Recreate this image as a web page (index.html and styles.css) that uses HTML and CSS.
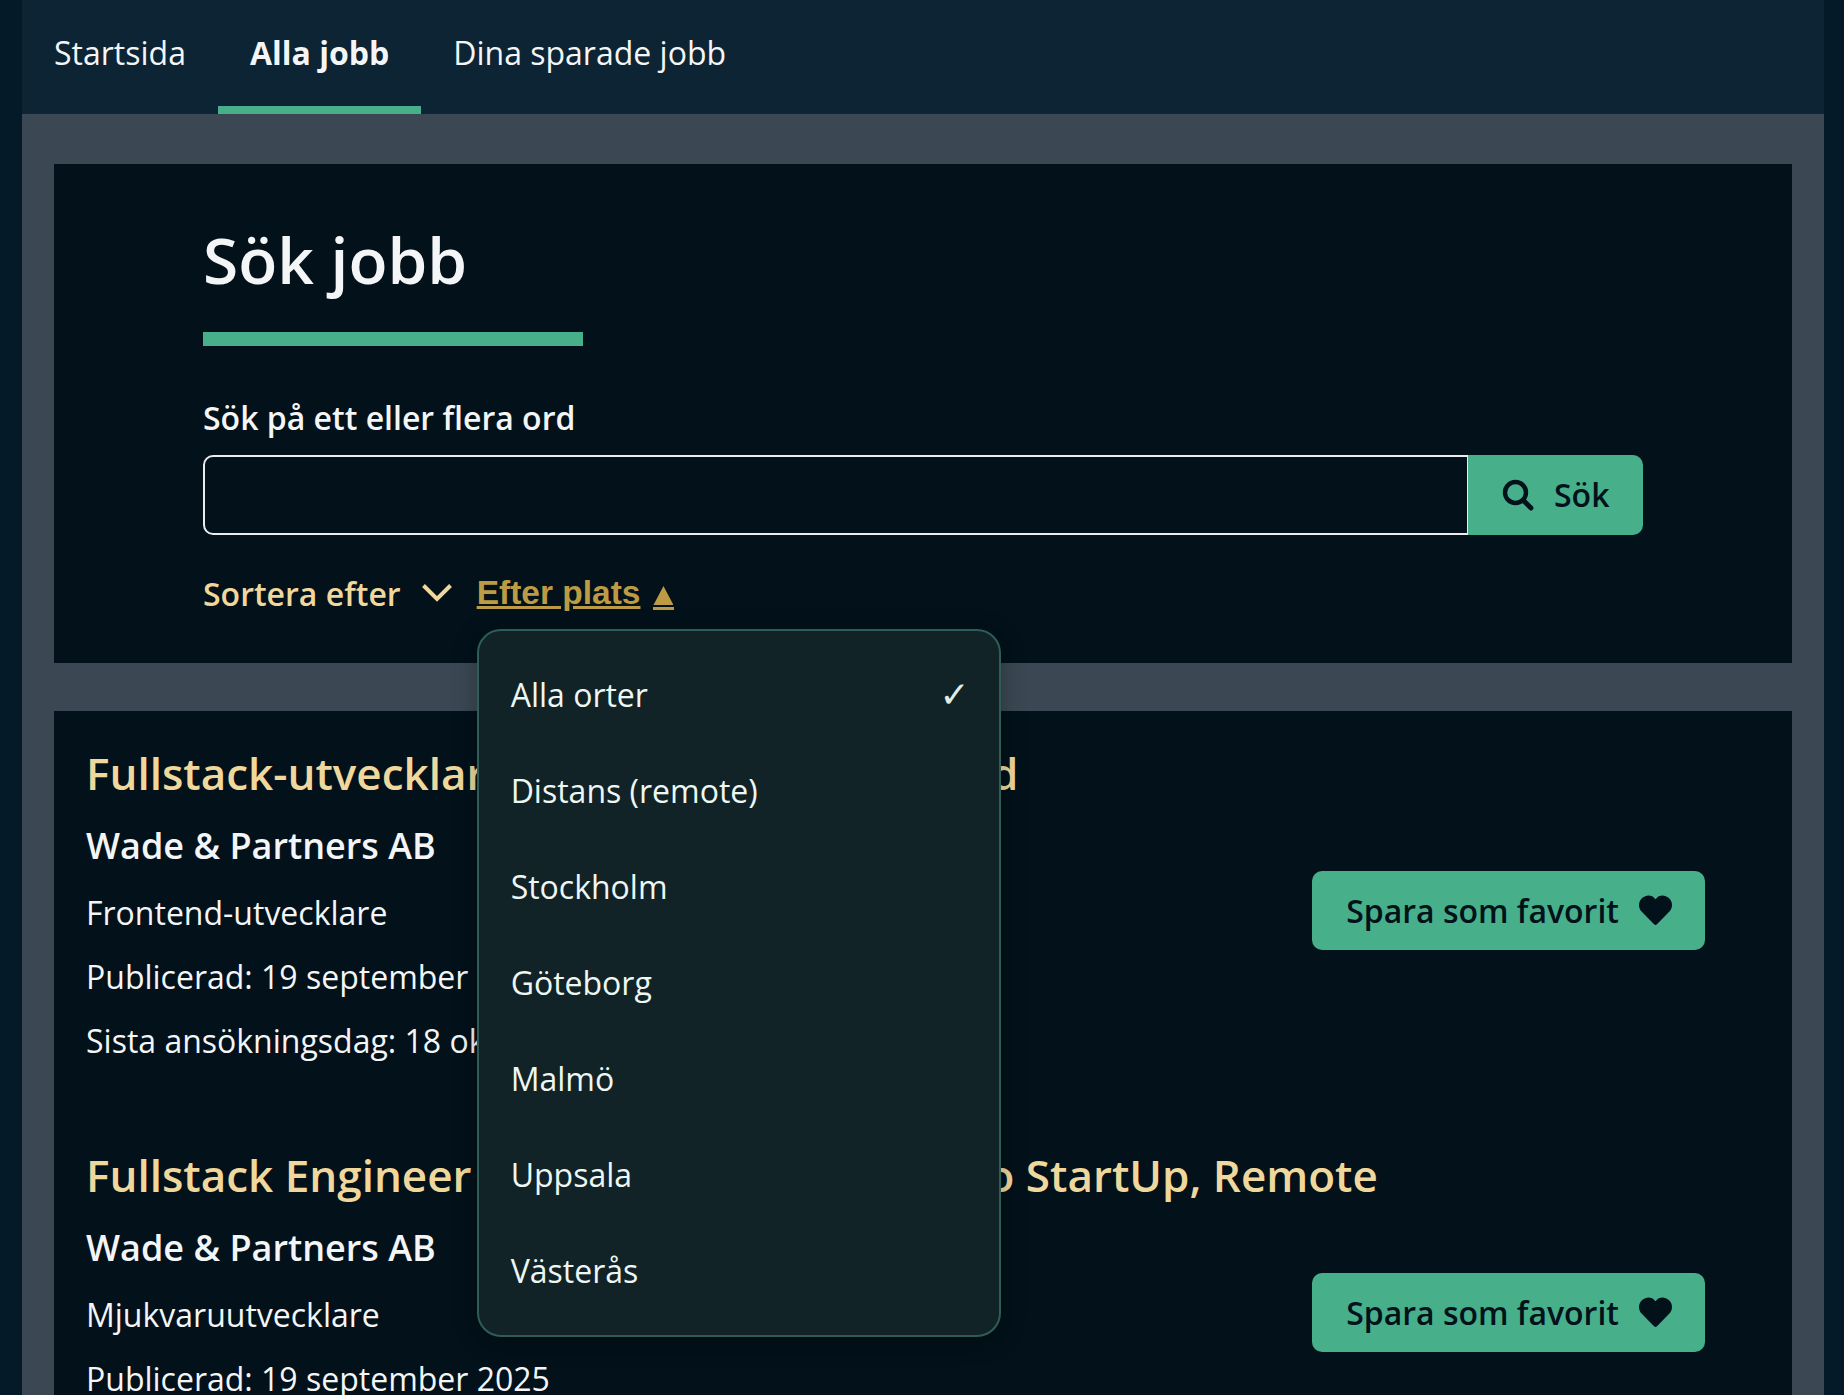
FILE: index.html
```html
<!DOCTYPE html>
<html lang="sv">

<head>
    <meta charset="UTF-8">
    <meta name="viewport" content="width=device-width, initial-scale=1.0">
    <title>Sök jobb</title>
    <link rel="stylesheet" href="styles.css">
</head>

<body>
    <div class="page">
        <nav class="nav">
            <a class="nav-link" href="#">Startsida</a>
            <a class="nav-link active" href="#">Alla jobb</a>
            <a class="nav-link" href="#">Dina sparade jobb</a>
        </nav>

        <main class="main">
            <section class="search-panel">
                <h1 class="title">Sök jobb</h1>
                <label class="search-label" for="q">Sök på ett eller flera ord</label>
                <div class="search-row">
                    <input class="search-input" type="text" id="q">
                    <button class="search-btn" type="button">
                        <svg class="search-icon" viewBox="0 0 32 32">
                            <circle cx="13.5" cy="13.5" r="10.5" fill="none" stroke="currentColor" stroke-width="4.4"/>
                            <line x1="21.5" y1="21.5" x2="29" y2="29" stroke="currentColor" stroke-width="4.8" stroke-linecap="round"/>
                        </svg>
                        Sök
                    </button>
                </div>
                <div class="sort-row">
                    <span class="sort-label">Sortera efter</span>
                    <svg class="chevron" viewBox="0 0 30 18">
                        <polyline points="1.5,1.5 15,15 28.5,1.5" fill="none" stroke="currentColor" stroke-width="4"/>
                    </svg>
                    <div class="place">
                        <button class="place-btn" type="button"><span class="place-text">Efter plats</span><span class="place-arrow"></span></button>
                        <ul class="menu">
                            <li class="menu-item">Alla orter<span class="check">✓</span></li>
                            <li class="menu-item">Distans (remote)</li>
                            <li class="menu-item">Stockholm</li>
                            <li class="menu-item">Göteborg</li>
                            <li class="menu-item">Malmö</li>
                            <li class="menu-item">Uppsala</li>
                            <li class="menu-item">Västerås</li>
                        </ul>
                    </div>
                </div>
            </section>

            <section class="jobs">
                <article class="job">
                    <div class="job-info">
                        <h2 class="job-title">Fullstack-utvecklare till techbolagets i Åland</h2>
                        <p class="company">Wade &amp; Partners AB</p>
                        <p class="job-line">Frontend-utvecklare</p>
                        <p class="job-line">Publicerad: 19 september 2025</p>
                        <p class="job-line">Sista ansökningsdag: 18 oktober 2025</p>
                    </div>
                    <button class="save-btn" type="button">
                        Spara som favorit
                        <svg class="heart" viewBox="0 0 512 512">
                            <path d="M462.3 62.6C407.5 15.9 326 8.4 275.7 60.2L256 80.8l-19.7-20.6C186 8.4 104.5 15.9 49.7 62.6c-62.8 53.6-66.1 149.8-9.9 207.9l193.5 199.8c12.5 12.9 32.8 12.9 45.3 0l193.5-199.8c56.3-58.1 53-154.3-9.8-207.9z"/>
                        </svg>
                    </button>
                </article>
                <article class="job">
                    <div class="job-info">
                        <h2 class="job-title">Fullstack Engineer till snabbväxande Kosmo StartUp, Remote</h2>
                        <p class="company">Wade &amp; Partners AB</p>
                        <p class="job-line">Mjukvaruutvecklare</p>
                        <p class="job-line">Publicerad: 19 september 2025</p>
                        <p class="job-line">Sista ansökningsdag: 18 oktober 2025</p>
                    </div>
                    <button class="save-btn" type="button">
                        Spara som favorit
                        <svg class="heart" viewBox="0 0 512 512">
                            <path d="M462.3 62.6C407.5 15.9 326 8.4 275.7 60.2L256 80.8l-19.7-20.6C186 8.4 104.5 15.9 49.7 62.6c-62.8 53.6-66.1 149.8-9.9 207.9l193.5 199.8c12.5 12.9 32.8 12.9 45.3 0l193.5-199.8c56.3-58.1 53-154.3-9.8-207.9z"/>
                        </svg>
                    </button>
                </article>
            </section>
        </main>
    </div>
</body>

</html>
```

FILE: styles.css
```css
* {
    margin: 0;
    padding: 0;
    box-sizing: border-box;
}

html, body {
    height: 100%;
    overflow: hidden;
}

body {
    font-family: "Open Sans", sans-serif;
    background-color: #051a28;
    color: #f4f5f6;
}

.page {
    width: 1802px;
    margin-left: 22px;
}

.nav {
    display: flex;
    height: 114px;
    background-color: #0c2433;
}

.nav-link {
    padding: 30px 32px 0;
    font-size: 32px;
    line-height: 46px;
    color: #f4f5f6;
    text-decoration: none;
}

.nav-link.active {
    font-weight: 700;
    border-bottom: 8px solid #47af8a;
}

.main {
    display: flex;
    flex-direction: column;
    gap: 48px;
    padding: 50px 32px 0;
    background-color: #3b4853;
}

.search-panel {
    height: 499px;
    padding: 58px 149px 0;
    background-color: #02111a;
}

.title {
    width: 380px;
    height: 124px;
    border-bottom: 14px solid #47af8a;
    font-size: 64px;
    font-weight: 600;
    line-height: 76px;
}

.search-label {
    display: block;
    margin-top: 52px;
    font-size: 32px;
    font-weight: 600;
    line-height: 40px;
}

.search-row {
    display: flex;
    height: 80px;
    margin-top: 17px;
}

.search-input {
    flex: 1;
    background-color: #02111a;
    border: 2px solid #ececec;
    border-right-width: 1px;
    border-radius: 10px 0 0 10px;
}

.search-btn {
    display: flex;
    align-items: center;
    gap: 20px;
    width: 175px;
    padding: 0 0 2px 34px;
    background-color: #47af8a;
    color: #02111a;
    border: none;
    border-radius: 0 10px 10px 0;
    font-family: "Open Sans", sans-serif;
    font-size: 32px;
    font-weight: 600;
}

.search-icon {
    width: 32px;
    height: 32px;
    margin-top: 1px;
}

.sort-row {
    display: flex;
    align-items: center;
    height: 48px;
    margin-top: 34px;
    color: #f0d89c;
}

.sort-label {
    font-size: 32px;
    font-weight: 600;
}

.chevron {
    width: 30px;
    height: 18px;
    margin-left: 21px;
}

.place {
    position: relative;
    margin-left: 25px;
}

.place-btn {
    display: flex;
    align-items: flex-end;
    gap: 13px;
    background: none;
    border: none;
    color: #bd9b45;
    font-family: "Liberation Sans", Arial, sans-serif;
    font-size: 33.5px;
    font-weight: 700;
}

.place-text {
    text-decoration: underline;
}

.place-arrow {
    display: block;
    width: 21px;
    height: 24px;
    margin-bottom: 2px;
    border-bottom: 3px solid currentColor;
}

.place-arrow::before {
    content: "";
    display: block;
    width: 20px;
    height: 19px;
    background-color: currentColor;
    clip-path: polygon(50% 0, 100% 100%, 0 100%);
}

.menu {
    position: absolute;
    top: 55px;
    left: 0;
    z-index: 10;
    width: 524px;
    height: 708px;
    padding: 15px 32px;
    list-style: none;
    background-color: #122327;
    border: 2px solid #2e5d57;
    border-radius: 24px;
    box-shadow: 0 4px 24px rgba(0, 0, 0, 0.3);
    color: #eef7f4;
}

.menu-item {
    display: flex;
    justify-content: space-between;
    align-items: center;
    height: 96px;
    font-size: 32px;
}

.check {
    margin-right: -3px;
    font-family: "DejaVu Sans", sans-serif;
    font-size: 36px;
    font-weight: 700;
    color: #dfeee8;
}

.jobs {
    display: flex;
    flex-direction: column;
    height: 800px;
    padding: 0 87px 0 32px;
    background-color: #02111a;
}

.job {
    display: flex;
    justify-content: space-between;
    align-items: flex-start;
    height: 402px;
    flex-shrink: 0;
}

.job-info {
    flex: 1;
    min-width: 0;
}

.job-title {
    margin-top: 29px;
    font-size: 44px;
    font-weight: 600;
    line-height: 66px;
    white-space: nowrap;
    color: #f0d89c;
}

.company {
    margin-top: 8px;
    margin-bottom: 3px;
    font-size: 36px;
    font-weight: 600;
    line-height: 64px;
}

.job-line {
    font-size: 32px;
    line-height: 64px;
}

.save-btn {
    display: flex;
    align-items: center;
    gap: 20px;
    height: 79px;
    margin-top: 160px;
    padding: 0 33px 0 34px;
    background-color: #47af8a;
    color: #02111a;
    border: none;
    border-radius: 10px;
    font-family: "Open Sans", sans-serif;
    font-size: 32px;
    font-weight: 600;
    white-space: nowrap;
}

.heart {
    width: 33px;
    height: 33px;
    fill: currentColor;
}
```
